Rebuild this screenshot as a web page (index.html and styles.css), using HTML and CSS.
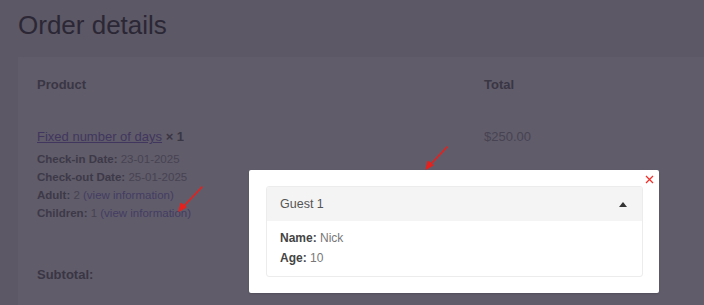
FILE: index.html
```html
<!DOCTYPE html>
<html lang="en">
<head>
    <meta charset="UTF-8">
    <title>Order details</title>
    <link rel="stylesheet" href="styles.css">
</head>
<body>
    <div class="page">
        <h1 class="title">Order details</h1>
        <table class="order">
            <thead>
                <tr>
                    <th class="col-product">Product</th>
                    <th class="col-total">Total</th>
                </tr>
            </thead>
            <tbody>
                <tr class="item">
                    <td>
                        <div class="item-name"><a href="#">Fixed number of days</a> <strong>× 1</strong></div>
                        <ul class="meta">
                            <li><strong>Check-in Date:</strong> 23-01-2025</li>
                            <li><strong>Check-out Date:</strong> 25-01-2025</li>
                            <li><strong>Adult:</strong> 2 <a href="#">(view information)</a></li>
                            <li><strong>Children:</strong> 1 <a href="#">(view information)</a></li>
                        </ul>
                    </td>
                    <td class="price">$250.00</td>
                </tr>
                <tr class="subtotal">
                    <th>Subtotal:</th>
                    <td></td>
                </tr>
            </tbody>
        </table>
    </div>

    <div class="popup">
        <svg class="popup-close" width="9" height="9" viewBox="0 0 9 9">
            <path d="M1 1 L8 8 M8 1 L1 8" stroke="#f0302a" stroke-width="1.3" fill="none"/>
        </svg>
        <div class="guest">
            <div class="guest-head">
                <span>Guest 1</span>
                <span class="caret"></span>
            </div>
            <div class="guest-body">
                <p><strong>Name:</strong> Nick</p>
                <p><strong>Age:</strong> 10</p>
            </div>
        </div>
    </div>

    <!-- annotation arrows -->
    <svg class="arrows" width="704" height="305" viewBox="0 0 704 305">
        <g stroke="#e8201c" stroke-width="1.6" fill="#e8201c" stroke-linecap="round">
            <line x1="447" y1="147" x2="430" y2="165"/>
            <polygon points="426,169 428,161 433,165" stroke-width="1"/>
            <line x1="202" y1="187" x2="183" y2="207"/>
            <polygon points="179,211 181,203 186,207" stroke-width="1"/>
        </g>
    </svg>
</body>
</html>
```

FILE: styles.css
```css
* {
    margin: 0;
    padding: 0;
    box-sizing: border-box;
}

body {
    width: 704px;
    height: 305px;
    overflow: hidden;
    background: #5c5865;
    font-family: "Liberation Sans", Arial, sans-serif;
    color: #474352;
}

.page {
    padding: 10px 0 0 18px;
}

.title {
    font-size: 26px;
    line-height: 30px;
    font-weight: normal;
    color: #2b2735;
    margin-bottom: 17px;
}

.order {
    width: 720px;
    border-collapse: collapse;
    background: #605c6a;
}

.order th,
.order td {
    text-align: left;
    vertical-align: top;
}

.order thead th {
    font-size: 13px;
    line-height: 20px;
    color: #3a3644;
    padding: 18px 0 32px 19px;
}

.col-product {
    width: 447px;
}

.item td {
    padding: 0 0 43px 19px;
}

.item-name {
    font-size: 13px;
    line-height: 20px;
    margin-bottom: 3px;
}

.item-name a {
    color: #41375e;
}

.item-name strong {
    color: #3a3644;
}

.meta {
    list-style: none;
    font-size: 11.5px;
    line-height: 18px;
}

.meta strong {
    color: #3d3948;
}

.meta a {
    color: #443c63;
    text-decoration: none;
}

.price {
    font-size: 13px;
    line-height: 20px;
}

.subtotal th {
    font-size: 13px;
    line-height: 20px;
    color: #3a3644;
    padding: 0 0 20px 19px;
}

.popup {
    position: absolute;
    left: 249px;
    top: 170px;
    width: 410px;
    height: 123px;
    background: #fff;
    border-radius: 2px;
    padding: 16px 16px 0 17px;
    box-shadow: 0 1px 2px rgba(0, 0, 0, 0.15);
}

.popup-close {
    position: absolute;
    right: 5px;
    top: 5px;
}

.guest {
    width: 377px;
    border: 1px solid #ececec;
    border-radius: 3px;
    overflow: hidden;
}

.guest-head {
    display: flex;
    justify-content: space-between;
    align-items: center;
    height: 34px;
    padding: 0 15px 0 13px;
    background: #f4f4f4;
    font-size: 12.5px;
    color: #555;
}

.caret {
    width: 0;
    height: 0;
    border-left: 4px solid transparent;
    border-right: 4px solid transparent;
    border-bottom: 5px solid #333;
}

.guest-body {
    padding: 7px 13px 8px;
    font-size: 12px;
    line-height: 20px;
    color: #777;
}

.guest-body strong {
    color: #444;
}

.arrows {
    position: absolute;
    left: 0;
    top: 0;
    pointer-events: none;
}
```
